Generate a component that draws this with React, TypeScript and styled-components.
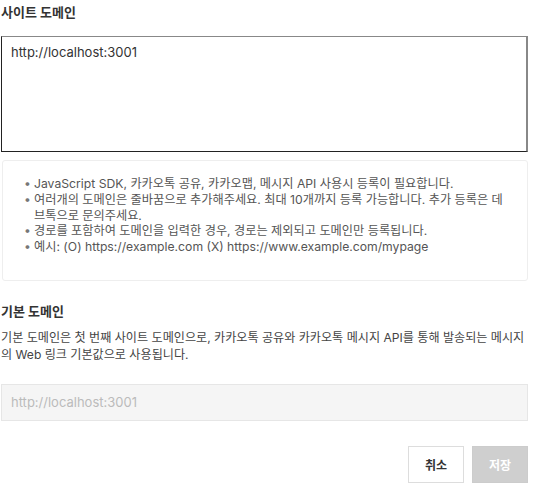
import React from "react";
import styled, { createGlobalStyle } from "styled-components";

const Global = createGlobalStyle`
  html, body { margin: 0; padding: 0; background: #fff; }
  body { font-family: "Inter", "Noto Sans CJK KR", sans-serif; color: #333; }
  * { box-sizing: border-box; }
`;

const Page = styled.div`
  width: 528px;
  padding: 3px 0 0 1px;
  display: flex;
  flex-direction: column;
`;

const Title = styled.h3<{ $mt?: number }>`
  margin: ${(p) => p.$mt ?? 0}px 0 0 0;
  font-size: 13px;
  font-weight: 700;
  color: #333;
  line-height: 18px;
`;

const Area = styled.textarea`
  margin-top: 15px;
  width: 527px;
  height: 116px;
  resize: none;
  border: 1px solid #222;
  border-top-color: #888;
  border-right: 2px solid #888;
  padding: 7px 9px;
  font-family: inherit;
  font-size: 13px;
  line-height: 16px;
  color: #333;
  outline: none;
`;

const Info = styled.div`
  margin-top: 8px;
  margin-left: 1px;
  width: 526px;
  border: 1px solid #eee;
  border-radius: 3px;
  padding: 15px 19px 25px 21px;
`;

const List = styled.ul`
  margin: 0;
  padding: 0;
  list-style: none;
`;

const Item = styled.li`
  position: relative;
  padding-left: 10px;
  font-size: 12.2px;
  line-height: 15.8px;
  color: #555;
  word-break: break-all;
  &::before {
    content: "•";
    position: absolute;
    left: 0;
    top: 0;
    color: #777;
  }
`;

const Desc = styled.p`
  margin: 9px 0 0 0;
  font-size: 12.1px;
  line-height: 17px;
  color: #444;
  word-break: break-all;
`;

const Field = styled.input`
  margin-top: 21px;
  width: 527px;
  height: 37px;
  border: 1px solid #e6e6e6;
  background: #f5f5f5;
  padding: 0 9px;
  font-family: inherit;
  font-size: 13px;
  color: #bbb;
  outline: none;
  &::placeholder { color: #bbb; }
`;

const Actions = styled.div`
  margin-top: 25px;
  display: flex;
  justify-content: flex-end;
  gap: 8px;
`;

const Btn = styled.button<{ $primary?: boolean }>`
  width: 56px;
  height: 37px;
  font-family: inherit;
  font-size: 12px;
  font-weight: 700;
  border: 1px solid ${(p) => (p.$primary ? "#ccc" : "#ddd")};
  background: ${(p) => (p.$primary ? "#cfcfcf" : "#fff")};
  color: ${(p) => (p.$primary ? "#fff" : "#333")};
  cursor: pointer;
`;

export default function App() {
  return (
    <>
      <Global />
      <Page>
        <Title>사이트 도메인</Title>
        <Area defaultValue="http://localhost:3001" />
        <Info>
          <List>
            <Item>JavaScript SDK, 카카오톡 공유, 카카오맵, 메시지 API 사용시 등록이 필요합니다.</Item>
            <Item>여러개의 도메인은 줄바꿈으로 추가해주세요. 최대 10개까지 등록 가능합니다. 추가 등록은 데브톡으로 문의주세요.</Item>
            <Item>경로를 포함하여 도메인을 입력한 경우, 경로는 제외되고 도메인만 등록됩니다.</Item>
            <Item>예시: (O) https://example.com (X) https://www.example.com/mypage</Item>
          </List>
        </Info>
        <Title $mt={21}>기본 도메인</Title>
        <Desc>
          기본 도메인은 첫 번째 사이트 도메인으로, 카카오톡 공유와 카카오톡 메시지 API를 통해 발송되는 메시지의 Web 링크 기본값으로 사용됩니다.
        </Desc>
        <Field disabled placeholder="http://localhost:3001" />
        <Actions>
          <Btn>취소</Btn>
          <Btn $primary disabled>저장</Btn>
        </Actions>
      </Page>
    </>
  );
}
